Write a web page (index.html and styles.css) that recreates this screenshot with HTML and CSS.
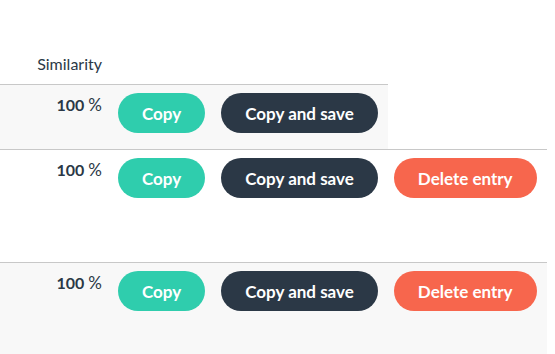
FILE: index.html
```html
<!DOCTYPE html>
<html lang="en">
  <head>
    <meta charset="UTF-8" />
    <meta name="viewport" content="width=device-width, initial-scale=1.0" />
    <title>Results</title>
    <link rel="stylesheet" href="styles.css">
  </head>
  <body>
    <div class="results">
      <div class="head">
        <span class="sim">Similarity</span>
      </div>

      <div class="row first">
        <span class="sim"><b>100</b> <span class="pct">%</span></span>
        <div class="actions">
          <button class="btn copy">Copy</button>
          <button class="btn save">Copy and save</button>
        </div>
      </div>

      <div class="row tall">
        <span class="sim"><b>100</b> <span class="pct">%</span></span>
        <div class="actions">
          <button class="btn copy">Copy</button>
          <button class="btn save">Copy and save</button>
          <button class="btn delete">Delete entry</button>
        </div>
      </div>

      <div class="row grey">
        <span class="sim"><b>100</b> <span class="pct">%</span></span>
        <div class="actions">
          <button class="btn copy">Copy</button>
          <button class="btn save">Copy and save</button>
          <button class="btn delete">Delete entry</button>
        </div>
      </div>
    </div>
  </body>
</html>
```

FILE: styles.css
```css
body {
  margin: 0;
  font-family: "Lato", "Liberation Sans", sans-serif;
  font-size: 16px;
  color: #2b3846;
  background-color: white;
}
.results {
  width: 547px;
}
.head {
  width: 388px;
  display: flex;
  padding: 52px 0 8px 0;
  border-bottom: 1px solid #c8c8c8;
}
.sim {
  width: 110px;
  box-sizing: border-box;
  padding-right: 8px;
  text-align: right;
  line-height: 24px;
  flex-shrink: 0;
}
.sim b {
  font-weight: 700;
}
.pct {
  font-size: 17px;
}
.row {
  display: flex;
  align-items: flex-start;
  padding-top: 8px;
  box-sizing: border-box;
}
.first {
  width: 388px;
  height: 64px;
  background-color: #f8f8f8;
}
.tall {
  height: 114px;
  border-top: 1px solid #c8c8c8;
  border-bottom: 1px solid #c8c8c8;
}
.grey {
  height: 92px;
  background-color: #f8f8f8;
}
.actions {
  display: flex;
  gap: 16px;
  padding-left: 8px;
}
.btn {
  height: 40px;
  border: none;
  border-radius: 20px;
  padding: 0 24px;
  font-family: "Lato", "Liberation Sans", sans-serif;
  font-size: 17px;
  font-weight: 700;
  color: white;
}
.copy {
  background-color: #2fcdad;
}
.save {
  background-color: #2b3846;
}
.delete {
  background-color: #f7664d;
}
```
